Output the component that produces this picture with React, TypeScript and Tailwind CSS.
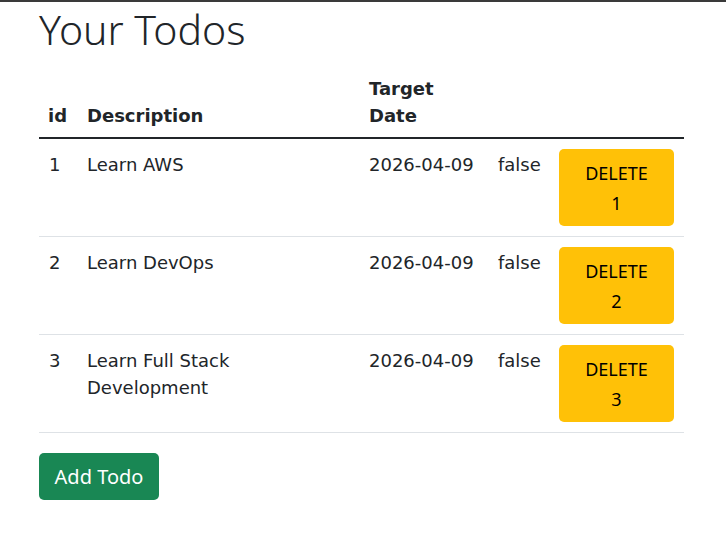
import React from 'react';

type Todo = { id: number; description: string; targetDate: string; done: boolean };

const todos: Todo[] = [
  { id: 1, description: 'Learn AWS', targetDate: '2026-04-09', done: false },
  { id: 2, description: 'Learn DevOps', targetDate: '2026-04-09', done: false },
  { id: 3, description: 'Learn Full Stack Development', targetDate: '2026-04-09', done: false },
];

export default function App() {
  return (
    <div className="min-h-[556px] bg-white border-t-2 border-[#3a3a3a] text-[#212529] font-['DejaVu_Sans','Noto_Sans_CJK_KR',sans-serif] text-[18px] leading-[27px]">
      <div className="ml-[39px] w-[645px]">
        <h1 className="font-['Noto_Sans',sans-serif] text-[41px] leading-[49px] font-light mt-[3px]">Your Todos</h1>

        {/* Todo table */}
        <table className="w-full table-fixed border-collapse mt-[11px] mb-[20px]">
          <colgroup>
            <col className="w-[39px]" />
            <col className="w-[282px]" />
            <col className="w-[129px]" />
            <col className="w-[60px]" />
            <col className="w-[135px]" />
          </colgroup>
          <thead>
            <tr className="border-b-2 border-[#212529] align-bottom text-left">
              <th className="px-[9px] pt-[10px] pb-[8px] font-bold">id</th>
              <th className="px-[9px] pt-[10px] pb-[8px] font-bold">Description</th>
              <th className="px-[9px] pt-[10px] pb-[8px] font-bold">Target Date</th>
              <th className="px-[9px] pt-[10px] pb-[8px]"></th>
              <th className="px-[9px] pt-[10px] pb-[8px]"></th>
            </tr>
          </thead>
          <tbody>
            {todos.map(todo => (
              <tr key={todo.id} className="border-b border-[#dee2e6] align-top">
                <td className="px-[10px] pt-[12px] pb-[9px]">{todo.id}</td>
                <td className="px-[9px] pt-[12px] pb-[9px]">{todo.description}</td>
                <td className="px-[9px] pt-[12px] pb-[9px] whitespace-nowrap">{todo.targetDate}</td>
                <td className="px-[9px] pt-[12px] pb-[9px]">{todo.done.toString()}</td>
                <td className="px-[10px] py-[10px]">
                  <button className="w-[115px] h-[77px] rounded-[5px] bg-[#ffc107] text-black font-['Noto_Sans',sans-serif] text-[18px] leading-[30px] flex flex-col items-center justify-center">
                    <span>DELETE</span>
                    <span>{todo.id}</span>
                  </button>
                </td>
              </tr>
            ))}
          </tbody>
        </table>

        <button className="w-[120px] h-[47px] rounded-[5px] bg-[#198754] text-white font-['Noto_Sans',sans-serif] text-[20px]">
          Add Todo
        </button>
      </div>
    </div>
  );
}
